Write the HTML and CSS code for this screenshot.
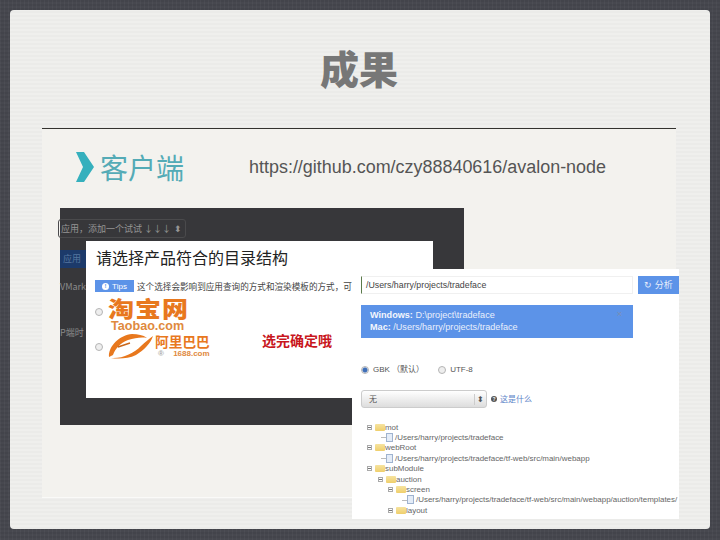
FILE: index.html
```html
<!DOCTYPE html>
<html lang="zh">
<head>
<meta charset="utf-8">
<title>成果</title>
<link rel="stylesheet" href="styles.css">
</head>
<body>
<main class="slide">
  <h1 class="title">成果</h1>
  <section class="panel">
    <div class="row">
      <div class="bullet">
        <svg class="chevron" width="18" height="30" viewBox="0 0 18 30"><path d="M0 0H8L18 15 8 30H0L7 15Z" fill="#35b0bd"/></svg>
        <span class="label">客户端</span>
      </div>
      <span class="link">https://github.com/czy88840616/avalon-node</span>
    </div>
  </section>

  <div class="shot-dark">
    <div class="select">应用，添加一个试试 ↓↓↓ <span class="updown">⬍</span></div>
    <div class="tab">应用</div>
    <div class="dim dim1">VMark</div>
    <div class="dim dim2">P端时</div>
  </div>

  <svg class="arrow" width="22" height="7" viewBox="0 0 22 7"><path d="M0 1 22 5" stroke="#c8161d" stroke-width="2.5" fill="none"/></svg>

  <div class="dialog">
    <h2 class="dialog-title">请选择产品符合的目录结构</h2>
    <div class="tips-row">
      <span class="tips"><b class="tips-i">!</b>Tips</span>
      <span class="tips-text">这个选择会影响到应用查询的方式和渲染模板的方式，可</span>
    </div>
    <div class="logos">
      <div class="logo-row logo-tb">
        <span class="radio"></span>
        <div class="taobao">
          <div class="tb-cn">淘宝网</div>
          <div class="tb-en">Taobao.com</div>
        </div>
      </div>
      <div class="logo-row logo-ali">
        <span class="radio"></span>
        <svg class="ali-mark" width="45" height="25" viewBox="0 0 45 25">
          <path d="M1 23C0 12 12 1 24 0 30 0 35 1 39 4 33 3 27 4 20 6 12 9 7 15 5 21Z" fill="#e8781e"/>
          <path d="M3 24C14 25 26 19 33 12 37 8 41 5 45 2 43 9 36 16 28 21 20 25 10 25 3 24Z" fill="#e8781e"/>
          <path d="M10 13 22 9" stroke="#c9661a" stroke-width="1.4"/>
        </svg>
        <div class="ali-text">
          <div class="ali-cn">阿里巴巴</div>
          <div class="ali-en">® <span>1688.com</span></div>
        </div>
      </div>
    </div>
    <div class="note">选完确定哦</div>
  </div>

  <div class="shot-light">
    <div class="path-row">
      <div class="path">/Users/harry/projects/tradeface</div>
      <div class="analyze">↻ 分析</div>
    </div>
    <div class="alert">
      <div><b>Windows:</b> D:\project\tradeface</div>
      <div><b>Mac:</b> /Users/harry/projects/tradeface</div>
      <span class="close">×</span>
    </div>
    <div class="charset">
      <span class="opt"><span class="radio on"></span>GBK （默认）</span>
      <span class="opt"><span class="radio"></span>UTF-8</span>
    </div>
    <div class="sel-row">
      <div class="sel">无<span class="updown">⬍</span></div>
      <span class="help"><b class="help-i">?</b>这是什么</span>
    </div>
    <ul class="tree">
      <li class="n0"><i class="tog"></i><i class="folder"></i>mot</li>
      <li class="n1"><i class="file"></i>/Users/harry/projects/tradeface</li>
      <li class="n0"><i class="tog"></i><i class="folder"></i>webRoot</li>
      <li class="n1"><i class="file"></i>/Users/harry/projects/tradeface/tf-web/src/main/webapp</li>
      <li class="n0"><i class="tog"></i><i class="folder"></i>subModule</li>
      <li class="n2"><i class="tog"></i><i class="folder"></i>auction</li>
      <li class="n3"><i class="tog"></i><i class="folder"></i>screen</li>
      <li class="n4"><i class="file"></i>/Users/harry/projects/tradeface/tf-web/src/main/webapp/auction/templates/</li>
      <li class="n3"><i class="tog"></i><i class="folder"></i>layout</li>
    </ul>
  </div>
</main>
</body>
</html>
```
FILE: styles.css
```css
* { box-sizing: border-box; }
html, body { margin: 0; height: 100%; }
body {
  width: 720px; height: 540px; overflow: hidden; padding: 10px 10px 11px;
  background:
    repeating-linear-gradient(90deg, rgba(255,255,255,.03) 0 1px, transparent 1px 4px),
    repeating-linear-gradient(0deg, #47484f 0 2px, #43444b 2px 4px);
  font-family: "Liberation Sans", "Noto Sans CJK SC", sans-serif;
}
.slide {
  position: relative; width: 700px; height: 519px; border-radius: 4px;
  padding: 0 34px 0 32px;
  background: repeating-linear-gradient(0deg, #ebebe9 0 2px, #efefed 2px 4px);
}
.title {
  margin: 0; height: 118px; padding-top: 33px; text-align: center;
  font: 900 39px/48px "Noto Sans CJK SC", sans-serif; color: #777;
}
.panel {
  height: 370px; border-top: 1px solid #33322f; border-bottom: 1px solid #fafaf8; background: #f3f2ee;
  padding: 21px 34px 0;
}
.row { display: flex; align-items: center; gap: 65px; }
.bullet { display: flex; align-items: center; gap: 6px; }
.chevron { display: block; }
.label { font: 400 28px/34px "Noto Sans CJK SC", sans-serif; color: #54abb6; }
.link { font-size: 17.95px; color: #555; white-space: nowrap; }

.shot-dark {
  position: absolute; left: 50px; top: 198px; width: 404px; height: 217px; background: #37373a;
  font: 9px/12px "Noto Sans CJK SC", sans-serif; color: #8a8a8a;
}
.select {
  position: absolute; left: -2px; top: 11px; width: 128px; height: 19px; padding-left: 2px;
  border: 1px solid #4a4a4c; border-radius: 3px; color: #959595; line-height: 17px; white-space: nowrap;
}
.select .updown { position: absolute; right: 3px; top: 0; }
.tab { position: absolute; left: 0; top: 42px; width: 26px; height: 18px; background: #1c3a6a; color: #55769f; padding: 3px; }
.dim { position: absolute; left: 0; }
.dim1 { top: 73px; }
.dim2 { top: 119px; }

.arrow { position: absolute; left: 321px; top: 348px; }

.dialog {
  position: absolute; left: 76px; top: 231px; width: 347px; height: 157px; background: #fff;
  padding: 4px 10px 0 9px; overflow: hidden;
}
.dialog-title { margin: 0 0 0 1px; font: 400 16px/24px "Noto Sans CJK SC", sans-serif; color: #222; }
.tips-row { display: flex; align-items: center; gap: 3px; margin-top: 11px; white-space: nowrap; }
.tips { display: flex; align-items: center; justify-content: center; gap: 3px; width: 39px; height: 12px; background: #5c93e8; color: #fff; font-size: 8px; }
.tips-i { width: 7px; height: 7px; border-radius: 50%; background: #fff; color: #5c93e8; font-size: 6px; line-height: 7px; text-align: center; }
.tips-text { font: 8.6px/12px "Noto Sans CJK SC", sans-serif; color: #444; }
.logos { display: flex; flex-direction: column; gap: 2px; margin-top: 3px; }
.logo-row { display: flex; align-items: center; gap: 5px; }
.logo-tb .radio { margin-bottom: 4px; }
.radio { width: 8px; height: 8px; border-radius: 50%; border: 1px solid #b5b5b5; background: #eee; flex: none; }
.taobao { color: #e8781e; }
.tb-cn { font: 900 26px/25px "Noto Sans CJK SC", sans-serif; letter-spacing: 1px; transform: scaleY(.85); transform-origin: 50% 40%; }
.tb-en { font: 700 12.6px/12px "Liberation Sans", sans-serif; margin-left: 3px; color: #df8a3e; }
.ali-mark { display: block; margin-right: -3px; }
.ali-text { color: #e8781e; }
.ali-cn { font: 700 13.7px/15px "Noto Sans CJK SC", sans-serif; }
.ali-en { font: 700 8px/10px "Liberation Sans", sans-serif; color: #aaa; margin-left: 3px; }
.ali-en span { margin-left: 7px; color: #df8a3e; }
.note { position: absolute; left: 176px; top: 92px; font: 700 14px/15px "Noto Sans CJK SC", sans-serif; color: #c8161d; }

.shot-light {
  position: absolute; left: 342px; top: 259px; width: 327px; height: 250px; background: #fff;
  padding: 7px 0 0 9px; color: #555; font: 8px/11px "Liberation Sans", "Noto Sans CJK SC", sans-serif;
}
.path-row { display: flex; gap: 5px; }
.path { width: 272px; height: 18px; border: 1px solid #f0f0f0; border-left-color: #5b7a4a; padding-left: 4px; line-height: 16px; font-size: 8.8px; color: #444; }
.analyze { width: 41px; height: 18px; background: #5c93e8; color: #e8eefb; text-align: center; line-height: 18px; font-size: 9px; }
.alert { position: relative; width: 272px; height: 33px; margin-top: 11px; padding: 4px 9px; background: #5c93e8; color: #eaf0fc; font-size: 9.1px; line-height: 12px; }
.alert b { color: #f4f7fd; }
.close { position: absolute; right: 11px; top: 3px; color: #7d8fb0; }
.charset { display: flex; gap: 14px; margin-top: 26px; align-items: center; }
.opt { display: flex; align-items: center; gap: 4px; }
.radio.on { background: radial-gradient(circle, #3f6fb8 0 2px, #dfe6f2 3px); }
.sel-row { display: flex; align-items: center; gap: 4px; margin-top: 15px; }
.sel { position: relative; width: 126px; height: 18px; padding: 3px 7px; border: 1px solid #ccc; border-radius: 3px; background: linear-gradient(#fff, #ddd); }
.sel .updown { position: absolute; right: 1px; top: 3px; width: 11px; border-left: 1px solid #ccc; text-align: center; }
.help { display: flex; align-items: center; gap: 3px; color: #5c83c8; }
.help-i { width: 6px; height: 6px; border-radius: 50%; background: #555; color: #fff; font-size: 5px; line-height: 6px; text-align: center; }
.tree { list-style: none; margin: 14px 0 0; padding: 0; font-size: 7.95px; color: #666; white-space: nowrap; }
.tree li { display: flex; align-items: center; height: 10.4px; }
.tog { width: 5px; height: 5px; border: 1px solid #aaa; margin-right: 3px; flex: none; background: linear-gradient(#777, #777) center / 3px 1px no-repeat; }
.folder { width: 10px; height: 7px; background: linear-gradient(#f6e3a0, #efcf6c); border-radius: 1px; flex: none; }
.file { width: 7px; height: 9px; background: #e4ecf7; border: 1px solid #9fb3cf; margin-right: 2px; flex: none; }
.n0 { padding-left: 6px; }
.n1 { padding-left: 25px; background: linear-gradient(#bbb, #bbb) 20px 5px / 5px 1px no-repeat; }
.n2 { padding-left: 17px; }
.n3 { padding-left: 27px; }
.n4 { padding-left: 46px; background: linear-gradient(#bbb, #bbb) 41px 5px / 5px 1px no-repeat; }
```
